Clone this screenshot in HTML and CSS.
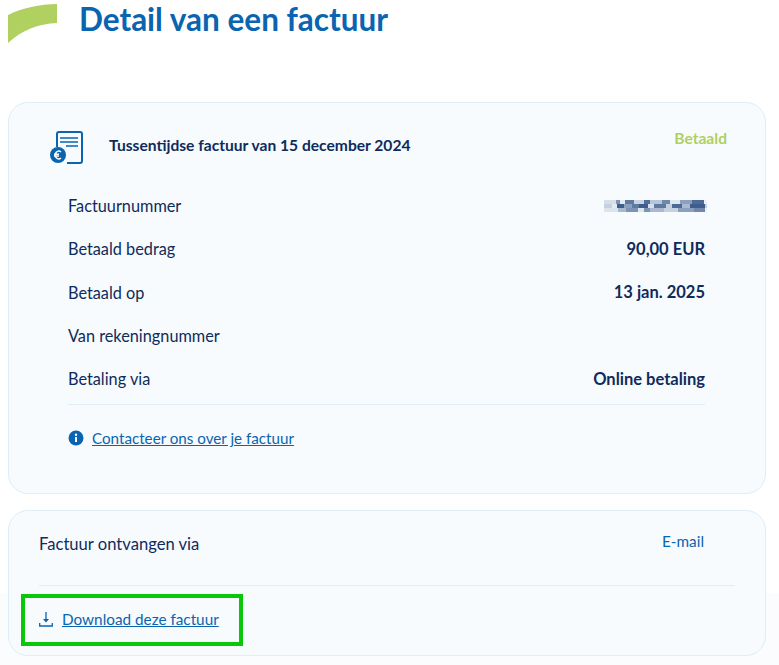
FILE: index.html
```html
<!DOCTYPE html>
<html lang="nl">
<head>
  <meta charset="UTF-8" />
  <title>Detail van een factuur</title>
  <link rel="stylesheet" href="styles.css">
</head>
<body>
  <header class="page-head">
    <svg class="swoosh" width="58" height="44" viewBox="0 0 58 44">
      <path d="M8 15C22 8 40 4 57 4V23C38 24 22 30 8 43Z" fill="#b0d05f"/>
    </svg>
    <h1>Detail van een factuur</h1>
  </header>

  <section class="card invoice-card">
    <div class="invoice-head">
      <svg class="invoice-icon" width="34" height="34" viewBox="0 0 34 34" fill="none">
        <path d="M8 17V4a2 2 0 0 1 2-2h21a2 2 0 0 1 2 2v27a2 2 0 0 1-2 2H18" stroke="#0a64b0" stroke-width="2"/>
        <path d="M11 8H29M11 12H29M17 16H29" stroke="#0a64b0" stroke-width="1.600"/>
        <circle cx="9" cy="25" r="8" fill="#0a64b0"/>
        <path d="M12 21.800a3.800 3.800 0 1 0 0 6.400M5 24.200h5M5 26h5" stroke="#fff" stroke-width="1.400"/>
      </svg>
      <h2>Tussentijdse factuur van 15 december 2024</h2>
      <span class="status">Betaald</span>
    </div>

    <div class="rows">
      <div class="row"><span>Factuurnummer</span><span class="blurred"></span></div>
      <div class="row"><span>Betaald bedrag</span><strong>90,00 EUR</strong></div>
      <div class="row"><span>Betaald op</span><strong>13 jan. 2025</strong></div>
      <div class="row"><span>Van rekeningnummer</span></div>
      <div class="row"><span>Betaling via</span><strong>Online betaling</strong></div>
    </div>

    <div class="contact">
      <svg width="16" height="16" viewBox="0 0 16 16">
        <circle cx="8" cy="8" r="7.500" fill="#0a64b0"/>
        <rect x="7" y="7" width="2" height="5" fill="#fff"/>
        <circle cx="8" cy="4.800" r="1.200" fill="#fff"/>
      </svg>
      <a href="#">Contacteer ons over je factuur</a>
    </div>
  </section>

  <section class="card received-card">
    <div class="received-row">
      <span>Factuur ontvangen via</span>
      <span class="channel">E-mail</span>
    </div>
    <div class="download-box">
      <svg width="14" height="16" viewBox="0 0 14 16" fill="none">
        <path d="M7 1V10" stroke="#0a64b0" stroke-width="1.300"/>
        <path d="M4 8H10L7 11.500Z" fill="#0a64b0"/>
        <path d="M.7 12V15H13.300V12" stroke="#0a64b0" stroke-width="1.300"/>
      </svg>
      <a href="#">Download deze factuur</a>
    </div>
  </section>
</body>
</html>
```

FILE: styles.css
```css
html, body {
  margin: 0;
  height: 100%;
}
body {
  font-family: 'Lato', sans-serif;
  color: #0f2b5b;
  background: linear-gradient(#fff 593px, #fbfcfd 593px);
  overflow: hidden;
}
a {
  color: #0a64b0;
}

/* --- Heading --- */
.page-head {
  display: flex;
  align-items: flex-start;
  height: 102px;
}
.swoosh {
  flex-shrink: 0;
}
.page-head h1 {
  margin: 0 0 0 21px;
  font-size: 31.500px;
  line-height: 38px;
  font-weight: 700;
  color: #0a64b0;
}

/* --- Cards --- */
.card {
  margin: 0 13px 0 8px;
  background: #f7fbfe;
  border: 1px solid #deedf6;
  border-radius: 20px;
  box-sizing: border-box;
}
.invoice-card {
  height: 392px;
  padding: 27px 60px 0 40px;
}
.received-card {
  height: 146px;
  margin-top: 16px;
  padding: 0 30px;
  position: relative;
}

.invoice-head {
  display: flex;
  align-items: center;
  height: 34px;
}
.invoice-icon {
  flex-shrink: 0;
}
.invoice-head h2 {
  margin: -4px 0 0 26px;
  font-size: 15.600px;
  font-weight: 700;
}
.status {
  margin-left: auto;
  margin-right: -22px;
  margin-top: -18px;
  font-size: 15.600px;
  font-weight: 700;
  color: #b0d05f;
}

.rows {
  margin: 20px 0 0 19px;
  padding-bottom: 4px;
  border-bottom: 1px solid #deedf6;
}
.row {
  display: flex;
  justify-content: space-between;
  align-items: center;
  height: 43.300px;
  font-size: 16.300px;
}
.row strong {
  font-size: 16.500px;
  font-weight: 700;
}

/* pixelated account number, three rows of blocks */
.blurred {
  width: 103px;
  height: 12px;
  margin-right: -2px;
  filter: blur(0.6px);
  background:
    linear-gradient(90deg, #d5deea 0 12px, #7d93b3 12px 16px, #e4eaf2 16px 21px, #5f7aa1 21px 30px, #c9d4e3 30px 40px, #516e99 40px 46px, #b6c5d8 46px 58px, #6f88ab 58px 66px, #dfe6ef 66px 76px, #8ba0bc 76px 88px, #4c6a96 88px 100px, #eef2f7 100px) 0 0 / 100% 4px no-repeat,
    linear-gradient(90deg, #c5d1e0 0 8px, #e4eaf2 8px 13px, #3f5d8c 13px 20px, #8ba0bc 20px 28px, #5f7aa1 28px 35px, #3f5d8c 35px 44px, #d5deea 44px 50px, #5f7aa1 50px 62px, #c5d1e0 62px 68px, #4c6a96 68px 78px, #a9b9cf 78px 86px, #3f5d8c 86px 101px, #c5d1e0 101px) 0 4px / 100% 4px no-repeat,
    linear-gradient(90deg, #dde4ee 0 14px, #a9b9cf 14px 22px, #7d93b3 22px 34px, #dde4ee 34px 40px, #7d93b3 40px 46px, #a9b9cf 46px 60px, #c5d1e0 60px 74px, #8ba0bc 74px 90px, #6f88ab 90px 101px, #eef2f7 101px) 0 8px / 100% 4px no-repeat;
}

.contact {
  display: flex;
  align-items: center;
  gap: 8px;
  margin: 24px 0 0 19px;
  font-size: 15.200px;
}

.received-row {
  display: flex;
  justify-content: space-between;
  height: 75px;
  padding-top: 23px;
  box-sizing: border-box;
  border-bottom: 1px solid #deedf6;
  font-size: 16.600px;
  line-height: 20px;
}
.channel {
  margin-right: 31px;
  margin-top: -3px;
  font-size: 15.300px;
  color: #0a64b0;
}

/* green marker round the download link */
.download-box {
  position: absolute;
  left: 12px;
  top: 83px;
  width: 222px;
  height: 52px;
  padding: 0 0 3px 14px;
  box-sizing: border-box;
  border: 4px solid #0bc70b;
  display: flex;
  align-items: center;
  gap: 9px;
  font-size: 15.300px;
}
```
